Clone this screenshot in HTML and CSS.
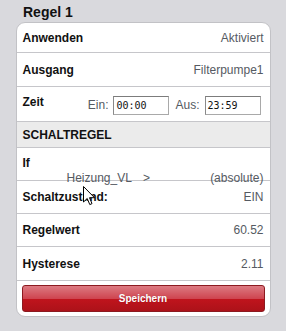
FILE: index.html
```html
<!DOCTYPE html>
<html>
<head>
<meta charset="utf-8">
<link rel="stylesheet" href="styles.css">
</head>
<body>
<div class="page">
  <div class="title">Regel 1</div>
  <div class="card">
    <div class="row first"><span class="label">Anwenden</span><span class="value">Aktiviert</span></div>
    <div class="row"><span class="label">Ausgang</span><span class="value">Filterpumpe1</span></div>
    <div class="row zeit">
      <span class="label">Zeit</span>
      <div class="times">
        <span class="tlabel">Ein:</span><span class="tinput">00:00</span>
        <span class="tlabel aus">Aus:</span><span class="tinput">23:59</span>
      </div>
    </div>
    <div class="row header"><span class="label">SCHALTREGEL</span></div>
    <div class="row ifrow">
      <div class="label ifl">If</div>
      <div class="cond"><span>Heizung_VL</span><span class="op">&gt;</span><span class="grow"></span><span>(absolute)</span></div>
    </div>
    <div class="row short"><span class="label">Schaltzustand:</span><span class="value">EIN</span></div>
    <div class="row short"><span class="label">Regelwert</span><span class="value">60.52</span></div>
    <div class="row"><span class="label">Hysterese</span><span class="value">2.11</span></div>
    <div class="btnwrap"><div class="btn">Speichern</div></div>
  </div>
  <svg class="cursor" width="13" height="20" viewBox="0 0 13 20"><path d="M0.5 0.5 L0.5 16 L4.2 12.5 L6.8 18.6 L9 17.6 L6.5 11.7 L11.5 11.7 Z" fill="#fff" stroke="#000" stroke-width="1" stroke-linejoin="round"/></svg>
</div>
</body>
</html>
```
FILE: styles.css
```css
html, body { margin: 0; padding: 0; }
body {
  background: #d9d9dd;
  font-family: "Liberation Sans", Arial, sans-serif;
  width: 286px;
  height: 331px;
  overflow: hidden;
}
.page { position: relative; padding: 3px 16px 0 16px; }
.title {
  font-weight: bold;
  font-size: 14px;
  line-height: 19px;
  padding-left: 7px;
  color: #111;
}
.card {
  background: #fff;
  border: 1px solid #c2c2c6;
  border-radius: 9px;
  box-sizing: border-box;
  width: 255px;
  margin-left: -0.5px;
  overflow: visible;
}
.row {
  display: flex;
  justify-content: space-between;
  align-items: center;
  height: 34px;
  box-sizing: border-box;
  padding: 0 6px 0 6px;
  border-bottom: 1px solid #c6c6ca;
}
.row.first { height: 30px; }
.row.short { height: 33px; }
.label { font-weight: bold; font-size: 12px; color: #111; }
.value { font-size: 12px; color: #555a62; }
.row.zeit { height: 35px; align-items: flex-start; padding-top: 8px; }
.times { display: flex; align-items: center; margin-right: 3px; }
.tlabel { font-size: 12px; color: #555a62; margin-right: 5px; }
.tlabel.aus { margin-left: 6px; }
.tinput {
  display: inline-block;
  width: 56px;
  height: 19px;
  box-sizing: border-box;
  border: 1px solid #a9a9a9;
  border-top-color: #7c7c7c;
  border-left-color: #8a8a8a;
  font-family: "DejaVu Sans Mono", monospace;
  font-size: 10px;
  line-height: 17px;
  padding-left: 2px;
  color: #111;
  margin-top: 1px;
}
.row.header { background: #ebebeb; height: 26px; }
.row.ifrow {
  height: 33px;
  display: block;
  padding-top: 8px;
  position: relative;
}
.ifl { line-height: 15px; }
.cond {
  display: flex;
  line-height: 15px;
  font-size: 12px;
  color: #555a62;
  padding-left: 44px;
  position: relative;
  z-index: 1;
}
.op { margin-left: 11px; }
.grow { flex: 1; }
.btnwrap { padding: 4px 5px 4px 5px; }
.btn {
  height: 27px;
  box-sizing: border-box;
  border: 1px solid #8c1a20;
  border-radius: 3px;
  background: linear-gradient(to bottom, #dc7a82 0%, #cf4550 50%, #c0141d 52%, #ac1219 100%);
  color: #fff;
  font-weight: bold;
  font-size: 10px;
  line-height: 25px;
  text-align: center;
  text-shadow: 0 0 1px rgba(80,0,0,0.4);
}
.cursor { position: absolute; left: 83px; top: 186px; z-index: 5; }
```
